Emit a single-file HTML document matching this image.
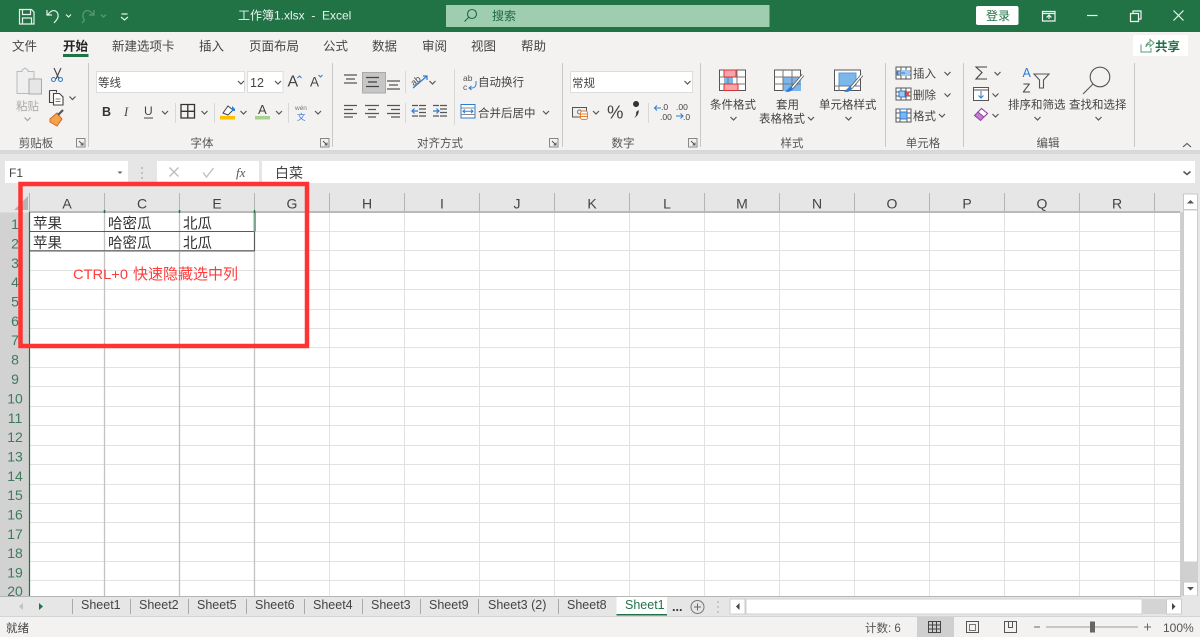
<!DOCTYPE html>
<html><head><meta charset="utf-8"><style>
html,body{margin:0;padding:0;background:#fff;width:1200px;height:637px;overflow:hidden}
svg{display:block;filter:blur(.3px)}
text{font-family:"Liberation Sans","Noto Sans CJK SC",sans-serif;font-size:12px;fill:#444}
.t{font-size:12.5px;fill:#444}
.g{font-size:11.5px;fill:#555;text-anchor:middle}
.c{font-size:14px;fill:#444;text-anchor:middle}
.n{font-size:14px;fill:#3f7a5a;text-anchor:middle}
.d{font-size:14.5px;fill:#333}
.s{font-size:12.5px;fill:#444}
.gl{stroke:#e2e2e2;stroke-width:1}
</style></head><body>
<svg width="1200" height="637" viewBox="0 0 1200 637" xmlns="http://www.w3.org/2000/svg">
<defs><path id="cv" d="M-3-1.500 0 1.500 3-1.500" fill="none" stroke="#555" stroke-width="1.200"/>
<g id="lc"><path d="M-4.500-4.500h8.500v8.500h-8.500z" fill="none" stroke="#888"/><path d="M-2-2 2 2M2 -.5V2H-.5" fill="none" stroke="#555"/></g></defs>

<!-- title bar -->
<rect width="1200" height="32" fill="#217346"/>
<g fill="none" stroke="#e8f1ec" stroke-width="1.200">
<path d="M19.500 9.500h12l2.500 2.500v12h-14.500z"/><path d="M22.500 9.500v5h8v-5M22.500 24v-6h9v6"/>
<path d="M47 10v5h5M47.500 15c3-4 6-5 8-4 3 1.500 3.500 6 1 9l-2.500 3"/>
<path d="M66 14.500l2.500 2.500 2.500-2.500"/>
<path d="M121.500 14h6M121 17l3.500 3 3.500-3"/></g>
<g fill="none" stroke="#5d9a78" stroke-width="1.200"><path d="M94 10v5h-5M93.500 15c-3-4-6-5-8-4-3 1.500-3.500 6-1 9l-2.500 3"/><path d="M101 14.500l2.500 2.500 2.500-2.500"/></g>
<text x="238" y="19.500" style="font-size:12px;fill:#eaf3ee" xml:space="preserve">工作簿1.xlsx  -  Excel</text>
<rect x="446" y="5" width="323.500" height="22" fill="#9fcdb0"/>
<circle cx="472" cy="14" r="4.500" fill="none" stroke="#1f6b41" stroke-width="1.100"/><path d="M468.500 17.500 464.500 21.500" stroke="#1f6b41" stroke-width="1.100"/>
<text x="492" y="20" style="font-size:12px;fill:#1f6b41">搜索</text>
<rect x="976" y="6" width="42.500" height="19" rx="2" fill="#fff"/>
<text x="986" y="20" style="font-size:12px;fill:#217346">登录</text>
<g fill="none" stroke="#eef5f1" stroke-width="1.200">
<path d="M1042.500 11.500h12.500v9.500h-12.500zM1042.500 13.500h12.500"/><path d="M1046.500 17.500l2.500-2.500 2.500 2.500M1049 15v4"/>
<path d="M1087 15.500h10.500"/>
<path d="M1130.500 13.500h8v8h-8zM1133 13v-2h8v8h-2.500"/>
<path d="M1173.500 10.500l10 10M1183.500 10.500l-10 10"/></g>

<!-- ribbon -->
<rect y="32" width="1200" height="120" fill="#f3f2f1"/>
<rect y="150" width="1200" height="4" fill="#d8d8d8"/>
<text class="t" x="12" y="50.500">文件</text>
<text class="t" x="63" y="50.500" style="font-weight:bold;fill:#222">开始</text>
<rect x="63" y="54" width="25.500" height="3" fill="#217346"/>
<text class="t" x="112" y="50.500">新建选项卡</text>
<text class="t" x="199" y="50.500">插入</text>
<text class="t" x="249" y="50.500">页面布局</text>
<text class="t" x="323" y="50.500">公式</text>
<text class="t" x="372" y="50.500">数据</text>
<text class="t" x="422" y="50.500">审阅</text>
<text class="t" x="471" y="50.500">视图</text>
<text class="t" x="521" y="50.500">帮助</text>
<rect x="1133" y="35" width="55" height="21" rx="2" fill="#fff"/>
<path d="M1141 44.500v7.500h10v-4M1146 47c0-3 2-5 4-5v-2.500l4 3.500-4 3.500v-2.500c-1.500 0-3 1-4 2.500" fill="none" stroke="#5d9a78"/>
<text x="1155" y="51" style="font-size:12.500px;font-weight:bold;fill:#217346">共享</text>

<!-- separators -->
<g stroke="#c8c8c8"><path d="M88.500 63v84M332.500 63v84M562.500 63v84M700.500 63v84M885.500 63v84M963.500 63v84M1134.500 63v84"/>
<path d="M175.500 103v20M214.500 103v20M288.500 103v20M405.500 71v22M405.500 103v20M454.500 69v56M648.500 103v20" stroke="#d8d8d8"/></g>

<!-- group labels -->
<g><text class="g" x="36" y="147">剪贴板</text><text class="g" x="202" y="147">字体</text><text class="g" x="440" y="147">对齐方式</text><text class="g" x="623" y="147">数字</text><text class="g" x="792" y="147">样式</text><text class="g" x="923" y="147">单元格</text><text class="g" x="1048" y="147">编辑</text></g>
<use href="#lc" x="81" y="143"/><use href="#lc" x="325" y="143"/><use href="#lc" x="554" y="143"/><use href="#lc" x="693" y="143"/>
<path d="M1183 147l4-3.500 4 3.500" fill="none" stroke="#555" stroke-width="1.100"/>

<!-- clipboard -->
<path d="M17 71.500h5v-1.500l3-2 3 2v1.500h6v22h-17z" fill="#efefef" stroke="#bbb"/>
<rect x="29" y="79" width="12.500" height="15" fill="#e6e6e6" stroke="#aaa"/>
<text x="16" y="110" style="font-size:11.500px;fill:#aaa">粘贴</text>
<use href="#cv" x="27.500" y="119" opacity=".5"/>
<g fill="none" stroke-width="1.100"><path d="M54 68l5 11M61 68l-5 11" stroke="#444"/><circle cx="53.500" cy="79.500" r="2" stroke="#2b7cd3"/><circle cx="60.500" cy="79.500" r="2" stroke="#2b7cd3"/></g>
<path d="M49.500 90.500h7v2M49.500 90.500v12h4" fill="none" stroke="#444" stroke-width="1.100"/><path d="M53.500 93.500h6l3.500 3.500v8h-9.500z" fill="#fff" stroke="#444" stroke-width="1.100"/><path d="M55.500 99h5M55.500 101.500h5" stroke="#777"/>
<use href="#cv" x="72.500" y="98"/>
<path d="M50 119l7-6 5 6-5 7-7-4z" fill="#f4a34a" stroke="#d2691e"/><path d="M58 115l5-5" stroke="#555" stroke-width="2.200"/>

<!-- font -->
<rect x="96.500" y="71.500" width="148" height="21" fill="#fff" stroke="#ddd"/>
<text x="98" y="86.500" style="font-size:11.500px;fill:#444">等线</text>
<use href="#cv" x="241" y="82.500"/>
<rect x="247.500" y="71.500" width="35.500" height="21" fill="#fff" stroke="#ddd"/>
<text x="250" y="87" style="font-size:12.500px;fill:#444">12</text>
<use href="#cv" x="278" y="82.500"/>
<text x="287.500" y="86.500" style="font-size:16px;fill:#444">A</text><path d="M297.500 78l2-2 2 2" fill="none" stroke="#2b7cd3"/>
<text x="310" y="86.500" style="font-size:13.500px;fill:#444">A</text><path d="M318.500 75l2 2 2-2" fill="none" stroke="#2b7cd3"/>
<text x="102" y="116" style="font-size:12.500px;font-weight:bold;fill:#333">B</text>
<text x="124" y="116" style="font-size:12.500px;font-style:italic;fill:#444;font-family:'Liberation Serif',serif">I</text>
<text x="144" y="115" style="font-size:12px;fill:#444">U</text><path d="M144 118h9" stroke="#444"/>
<use href="#cv" x="165" y="112.500"/>
<path d="M181 104.500h13.500v13.500h-13.500zM187.800 104.500v13.500M181 111.300h13.500" fill="none" stroke="#333" stroke-width="1.300"/>
<use href="#cv" x="204.500" y="112.500"/>
<path d="M223 113l5-7 5 4-5 5z" fill="#fff" stroke="#444"/><path d="M232 106l3 3v2h-3z" fill="#2b7cd3"/><rect x="220" y="116" width="15" height="3.500" fill="#ffc000"/>
<use href="#cv" x="243.500" y="112.500"/>
<text x="258" y="114" style="font-size:13px;fill:#444">A</text><rect x="255" y="116" width="15" height="3.500" fill="#a9d18e"/>
<use href="#cv" x="279" y="112.500"/>
<text x="295" y="110" style="font-size:6.500px;fill:#777">wén</text><text x="297" y="120" style="font-size:8.500px;fill:#2b7cd3">文</text>
<use href="#cv" x="318" y="112.500"/>

<!-- align -->
<g stroke="#555" fill="none" stroke-width="1.200">
<path d="M344 75h13M346 79h9M344 83h13"/>
<rect x="362.500" y="72.500" width="23" height="20.500" fill="#c6c6c6" stroke="#aaa" stroke-width="1"/><path d="M366 77.500h13M368 82h9M366 86.500h13" stroke="#444"/>
<path d="M387 81h13M389 85h9M387 89h13"/>
<path d="M344 105.500h13M344 109.500h9M344 113.500h13M344 117h9"/>
<path d="M365 105.500h14M368 109.500h8M365 113.500h14M368 117h8"/>
<path d="M387 105.500h13M391 109.500h9M387 113.500h13M391 117h9"/>
<path d="M419 105.500h7M419 109h7M419 112.500h7M419 116h7M412 105.500h6M412 116h6"/><path d="M418 111h-6M414.500 108.500l-2.500 2.500 2.500 2.500" stroke="#2b7cd3"/>
<path d="M440 105.500h7M440 109h7M440 112.500h7M440 116h7M433 105.500h6M433 116h6"/><path d="M433 111h6M436.500 108.500l2.500 2.500-2.500 2.500" stroke="#2b7cd3"/>
<path d="M413 88l14-12M423 76h4v4" stroke="#2b7cd3"/></g>
<text x="410" y="84" style="font-size:9px;fill:#444" transform="rotate(-40 415 80)">ab</text>
<use href="#cv" x="432.500" y="82.500"/>
<text x="463" y="81" style="font-size:8.500px;fill:#555">ab</text><text x="463" y="90" style="font-size:8.500px;fill:#555">c</text>
<path d="M476 81v3c0 2.500-2 4-4 4h-3M471.500 86l-2.500 2 2.500 2" fill="none" stroke="#2b7cd3"/>
<text x="478" y="86" style="font-size:11.500px;fill:#444">自动换行</text>
<rect x="461" y="104.500" width="14" height="13.500" fill="#fff" stroke="#2b7cd3"/><path d="M461 108h14M461 114.500h14" stroke="#888"/><path d="M463 111.300h10M465 109.500l-2 1.800 2 1.800M471 109.500l2 1.800-2 1.800" fill="none" stroke="#2b7cd3"/>
<text x="478" y="117" style="font-size:11.500px;fill:#444">合并后居中</text>
<use href="#cv" x="546" y="112.500"/>

<!-- number -->
<rect x="570.500" y="71.500" width="122" height="21" fill="#fff" stroke="#ddd"/>
<text x="572" y="87" style="font-size:11.500px;fill:#444">常规</text>
<use href="#cv" x="687.500" y="82.500"/>
<rect x="572.500" y="107.500" width="14" height="9.500" fill="#eee" stroke="#555"/><circle cx="579.500" cy="112" r="2" fill="none" stroke="#777"/>
<rect x="580.500" y="111" width="7" height="8.500" rx="2" fill="#fff" stroke="#ed7d31"/><path d="M581 114h6M581 116.500h6" stroke="#ed7d31"/>
<use href="#cv" x="596" y="112.500"/>
<text x="607" y="118.500" style="font-size:18.500px;fill:#444">%</text>
<path d="M636 107a3 3 0 1 1 .1 0zM638.600 110c.4 3-1 6-4.200 8 1.500-2 2-3.500 1.800-6z" fill="#333"/>
<text x="661" y="110" style="font-size:8.500px;fill:#444">.0</text><text x="660" y="120" style="font-size:8.500px;fill:#444">.00</text>
<path d="M661 107h-6.500M657 104.500l-2.500 2.500 2.500 2.500" fill="none" stroke="#2b7cd3" transform="translate(0 1)"/>
<text x="676" y="110" style="font-size:8.500px;fill:#444">.00</text><text x="683" y="120" style="font-size:8.500px;fill:#444">.0</text>
<path d="M676 116h7M680.500 113.500l2.500 2.500-2.500 2.500" fill="none" stroke="#2b7cd3"/>

<!-- styles -->
<rect x="719.500" y="70" width="26" height="20.500" fill="#fff" stroke="#555"/>
<rect x="724" y="77" width="9" height="7" fill="#7db6ea"/>
<path d="M719.500 77h26M719.500 84h26M728 70v20.500M737 70v20.500" stroke="#777" fill="none"/>
<rect x="724" y="70" width="12" height="7" fill="#f6a5ab" stroke="#d33"/><rect x="724" y="84" width="14" height="6.500" fill="#f6a5ab" stroke="#d33"/>
<text x="710" y="108.500" style="font-size:11.500px;fill:#444">条件格式</text><use href="#cv" x="733.500" y="118.500"/>
<rect x="774.500" y="70" width="26" height="20.500" fill="#fff" stroke="#555"/><rect x="783" y="77" width="18" height="14" fill="#7db6ea"/>
<path d="M774.500 77h26M774.500 84h26M783 70v20.500M792 70v20.500" stroke="#777" fill="none"/>
<path d="M803 75l-11 13" stroke="#555" stroke-width="3"/><path d="M803 75l-11 13" stroke="#fff" stroke-width="1.500"/><path d="M791 86c-2 2-4 4-6 5.500 3 1 7 0 8-3z" fill="#2b7cd3"/>
<text x="776" y="108.500" style="font-size:11.500px;fill:#444">套用</text>
<text x="759" y="122.500" style="font-size:11.500px;fill:#444">表格格式</text><use href="#cv" x="811" y="118.500"/>
<rect x="834.500" y="70" width="26" height="20.500" fill="#fff" stroke="#555"/><rect x="839" y="73" width="17" height="13" fill="#7db6ea" stroke="#5b9bd5"/>
<path d="M834.500 86h26M839 86v4.500M851 86v4.500" stroke="#777" fill="none"/>
<path d="M862 75l-11 13" stroke="#555" stroke-width="3"/><path d="M862 75l-11 13" stroke="#fff" stroke-width="1.500"/><path d="M850 86c-2 2-4 4-6 5.500 3 1 7 0 8-3z" fill="#2b7cd3"/>
<text x="819" y="108.500" style="font-size:11.500px;fill:#444">单元格样式</text><use href="#cv" x="848.500" y="118.500"/>

<!-- cells -->
<g fill="none" stroke="#555">
<rect x="896" y="67" width="15" height="12" fill="#fff"/><path d="M896 71h15M896 75h15M901 67v12M906 67v12"/><rect x="901" y="70" width="9" height="6" fill="#9cc8ef" stroke="none"/><path d="M905 73h-8M899 71l-2.500 2 2.500 2" stroke="#2b7cd3"/>
<rect x="896" y="88" width="15" height="12" fill="#fff"/><path d="M896 92h15M896 96h15M901 88v12M906 88v12"/><rect x="899" y="91" width="6" height="6" fill="#9cc8ef" stroke="#2b7cd3"/><path d="M906 92l3.500 4M909.500 92l-3.500 4" stroke="#e33"/>
<rect x="896" y="109" width="15" height="13" fill="#fff"/><path d="M896 113h15M896 118h15M900 109v13M907 109v13"/><rect x="900" y="112" width="7" height="7" fill="#7db6ea" stroke="#2b7cd3"/><path d="M899 109h9" stroke="#2b7cd3"/>
</g>
<text x="913" y="77.500" style="font-size:11.500px;fill:#444">插入</text><use href="#cv" x="947.500" y="73.500"/>
<text x="913" y="99" style="font-size:11.500px;fill:#444">删除</text><use href="#cv" x="947.500" y="95"/>
<text x="913" y="120" style="font-size:11.500px;fill:#444">格式</text><use href="#cv" x="942" y="115.500"/>

<!-- editing -->
<path d="M987 67h-11l6 5.500-6 6.500h11" fill="none" stroke="#444" stroke-width="1.100"/><use href="#cv" x="997.500" y="73.500"/>
<rect x="973.500" y="87.500" width="15" height="13" fill="#fff" stroke="#555"/><path d="M973.500 90h15" stroke="#555"/><path d="M981 91v7M978.500 95.500l2.500 2.500 2.500-2.500" fill="none" stroke="#2b7cd3"/><use href="#cv" x="995.500" y="95"/>
<path d="M974.500 115.500l7-7 6 5-7 7z" fill="#c77cd3" stroke="#8e3fa2"/><path d="M981.500 108.500l6 5-3.500 3.500-6-5z" fill="#fff" stroke="#8e3fa2"/><use href="#cv" x="995.500" y="115.500"/>
<text x="1022.500" y="77" style="font-size:12.500px;fill:#2b7cd3">A</text><text x="1022.500" y="92.500" style="font-size:13px;fill:#444">Z</text>
<path d="M1034 74h15l-5.500 6v8l-4 0v-8z" fill="none" stroke="#555" stroke-width="1.100"/>
<text x="1008" y="108.500" style="font-size:11.500px;fill:#444">排序和筛选</text><use href="#cv" x="1037.500" y="118.500"/>
<circle cx="1100" cy="77" r="9.800" fill="none" stroke="#555" stroke-width="1.100"/><path d="M1093 84l-10 10" stroke="#555" stroke-width="1.100"/>
<text x="1069" y="108.500" style="font-size:11.500px;fill:#444">查找和选择</text><use href="#cv" x="1098.500" y="118.500"/>

<!-- formula bar -->
<rect y="154" width="1200" height="443" fill="#e6e6e6"/>
<rect x="5" y="161" width="123" height="22" fill="#fff"/>
<text x="9" y="177" style="font-size:12px;fill:#444">F1</text>
<path d="M117.500 171.500h5l-2.500 2.500z" fill="#666"/>
<path d="M142 167v2M142 172v2M142 177v2" stroke="#999"/>
<rect x="157" y="161" width="102" height="22" fill="#fff"/>
<path d="M169.500 167.500l9 9M178.500 167.500l-9 9" stroke="#bbb" stroke-width="1.300"/>
<path d="M203 172.500l3.500 4.500 7-9" fill="none" stroke="#bbb" stroke-width="1.300"/>
<text x="236" y="177" style="font-size:13px;font-style:italic;fill:#555;font-family:'Liberation Serif',serif">fx</text>
<rect x="262" y="161" width="933" height="22" fill="#fff"/>
<text x="275" y="178" style="font-size:14px;fill:#444">白菜</text>
<path d="M1183.500 171.500l3.500 3 3.500-3" fill="none" stroke="#555" stroke-width="1.500"/>

<!-- sheet headers -->
<path d="M28 196v14h-14z" fill="#b5b5b5"/>
<g stroke="#b4b4b4"><path d="M29.500 193v19M104.500 193v19M179.500 193v19M254.500 193v19M329.500 193v19M404.500 193v19M479.500 193v19M554.500 193v19M629.500 193v19M704.500 193v19M779.500 193v19M854.500 193v19M929.500 193v19M1004.500 193v19M1079.500 193v19M1154.500 193v19"/></g>
<path d="M29 212h1151" stroke="#ababab" stroke-width="1.500"/>
<g><text class="c" x="67" y="208.500">A</text><text class="c" x="142" y="208.500">C</text><text class="c" x="217" y="208.500">E</text><text class="c" x="292" y="208.500">G</text><text class="c" x="367" y="208.500">H</text><text class="c" x="442" y="208.500">I</text><text class="c" x="517" y="208.500">J</text><text class="c" x="592" y="208.500">K</text><text class="c" x="667" y="208.500">L</text><text class="c" x="742" y="208.500">M</text><text class="c" x="817" y="208.500">N</text><text class="c" x="892" y="208.500">O</text><text class="c" x="967" y="208.500">P</text><text class="c" x="1042" y="208.500">Q</text><text class="c" x="1117" y="208.500">R</text></g>

<!-- row headers -->
<rect y="212.500" width="29" height="384" fill="#d2d2d2"/>
<g><text class="n" x="15" y="229">1</text><text class="n" x="15" y="248.500">2</text><text class="n" x="15" y="268">3</text><text class="n" x="15" y="287">4</text><text class="n" x="15" y="306.500">5</text><text class="n" x="15" y="326">6</text><text class="n" x="15" y="345">7</text><text class="n" x="15" y="364.500">8</text><text class="n" x="15" y="384">9</text><text class="n" x="15" y="403.500">10</text><text class="n" x="15" y="423">11</text><text class="n" x="15" y="442">12</text><text class="n" x="15" y="461.500">13</text><text class="n" x="15" y="481">14</text><text class="n" x="15" y="500">15</text><text class="n" x="15" y="519.500">16</text><text class="n" x="15" y="539">17</text><text class="n" x="15" y="558">18</text><text class="n" x="15" y="577.500">19</text><text class="n" x="15" y="596">20</text></g>

<!-- grid -->
<rect x="30" y="213" width="1150" height="384" fill="#fff"/>
<g class="gl">
<path d="M30 231.500h1150M30 250.500h1150M30 270.500h1150M30 289.500h1150M30 309.500h1150M30 328.500h1150M30 347.500h1150M30 367.500h1150M30 386.500h1150M30 406.500h1150M30 425.500h1150M30 445.500h1150M30 464.500h1150M30 484.500h1150M30 503.500h1150M30 522.500h1150M30 542.500h1150M30 561.500h1150M30 580.500h1150"/>
<path d="M329.500 213v384M404.500 213v384M479.500 213v384M554.500 213v384M629.500 213v384M704.500 213v384M779.500 213v384M854.500 213v384M929.500 213v384M1004.500 213v384M1079.500 213v384M1154.500 213v384"/>
</g>
<path d="M104.500 213v384M179.500 213v384M254.500 213v384" stroke="#c2c2c2" stroke-width="1.300"/>
<path d="M29.500 212v385" stroke="#217346" stroke-width="1.200"/>
<path d="M30 231.500h225M30 250.800h225M254.500 231v20" stroke="#5a5a5a" stroke-width="1.100" fill="none"/>
<path d="M30 251.600h225" stroke="#bbb" stroke-width=".8"/>
<rect x="253.500" y="212.500" width="2.500" height="19" fill="#7fa794"/>
<path d="M104.500 210v3M179.500 210v3M254.500 210v3" stroke="#217346" stroke-width="1.500"/>

<text class="d" x="33" y="228.500">苹果</text><text class="d" x="108" y="228.500">哈密瓜</text><text class="d" x="183" y="228.500">北瓜</text>
<text class="d" x="33" y="248">苹果</text><text class="d" x="108" y="248">哈密瓜</text><text class="d" x="183" y="248">北瓜</text>
<text x="73" y="279" style="font-size:14px;fill:#ff3b3b" textLength="55" lengthAdjust="spacingAndGlyphs">CTRL+0</text>
<text x="133" y="279" style="font-size:15px;fill:#ff3b3b">快速隐藏选中列</text>
<rect x="20.500" y="184" width="286.500" height="162" fill="none" stroke="#ff3333" stroke-width="4.500"/>

<!-- right scrollbar -->
<rect x="1180" y="212" width="3" height="385" fill="#cfcfcf"/>
<rect x="1183" y="193" width="15" height="404" fill="#e6e6e6"/>
<rect x="1183.500" y="194" width="14" height="15.500" fill="#fff" stroke="#c8c8c8"/>
<path d="M1187 203.500h7l-3.500-3.500z" fill="#555"/>
<rect x="1183.500" y="210" width="14" height="352" fill="#fff" stroke="#ccc"/>
<rect x="1183" y="562" width="15" height="20" fill="#d0d0d0"/>
<rect x="1183.500" y="582" width="14" height="14" fill="#fff" stroke="#c8c8c8"/>
<path d="M1187 587h7l-3.500 3.500z" fill="#555"/>

<!-- tabs -->
<rect y="596" width="1200" height="21" fill="#e6e6e6"/>
<path d="M0 596.500h1181" stroke="#b5b5b5"/>
<path d="M0 616.500h1200" stroke="#d4d4d4"/>
<path d="M23 603v7l-4-3.500z" fill="#c2c2c2"/><path d="M39 603v7l4-3.500z" fill="#217346"/>
<g stroke="#aaa"><path d="M72.500 599v15M130.500 599v15M188.500 599v15M246.500 599v15M304.500 599v15M362.500 599v15M420.500 599v15M478.500 599v15M558.500 599v15"/></g>
<g><text class="s" x="81" y="609">Sheet1</text><text class="s" x="139" y="609">Sheet2</text><text class="s" x="197" y="609">Sheet5</text><text class="s" x="255" y="609">Sheet6</text><text class="s" x="313" y="609">Sheet4</text><text class="s" x="371" y="609">Sheet3</text><text class="s" x="429" y="609">Sheet9</text><text class="s" x="488" y="609">Sheet3 (2)</text><text class="s" x="567" y="609">Sheet8</text></g>
<rect x="616.500" y="597" width="50.500" height="18" fill="#fff"/>
<rect x="616.500" y="614" width="50.500" height="1.500" fill="#217346"/>
<text x="625" y="609" style="font-size:12.500px;fill:#217346">Sheet1</text>
<text x="672" y="611" style="font-size:12.500px;font-weight:bold;fill:#333">...</text>
<circle cx="697.500" cy="607" r="6.500" fill="none" stroke="#777"/><path d="M694 607h7M697.500 603.500v7" stroke="#666"/>
<path d="M718 601v2M718 606v2M718 611v2" stroke="#aaa"/>
<rect x="730" y="599" width="15" height="15" fill="#fff" stroke="#ccc"/><path d="M739.500 603v7l-3.500-3.500z" fill="#444"/>
<rect x="746" y="599" width="396" height="15" fill="#fff" stroke="#d0d0d0"/>
<rect x="1142" y="599" width="24" height="15" fill="#d4d4d4"/>
<rect x="1166.500" y="599" width="15" height="15" fill="#fff" stroke="#ccc"/><path d="M1172 603v7l3.500-3.500z" fill="#444"/>

<!-- status -->
<rect y="617" width="1200" height="20" fill="#f3f2f1"/>
<text x="6" y="632" style="font-size:11.500px;fill:#444">就绪</text>
<text x="865" y="632" style="font-size:11.500px;fill:#555">计数: 6</text>
<rect x="917" y="617" width="37" height="20" fill="#cfcfcf"/>
<path d="M928.500 621.500h12v11h-12zM928.500 625h12M928.500 629h12M932.500 621.500v11M936.500 621.500v11" fill="none" stroke="#444"/>
<path d="M966.500 621.500h12v11h-12z" fill="none" stroke="#555"/><path d="M969.500 624.500h6v6h-6z" fill="none" stroke="#777"/>
<path d="M1004.500 621.500h12v11h-12zM1008.500 621.500v6h4v-6" fill="none" stroke="#555"/>
<path d="M1034 627h6" stroke="#666"/>
<path d="M1046 627h92" stroke="#999"/>
<rect x="1090" y="621.500" width="5" height="11" fill="#666"/>
<path d="M1144 627h7M1147.500 623.500v7" stroke="#666"/>
<text x="1163" y="632" style="font-size:12px;fill:#555">100%</text>
</svg>
</body></html>
